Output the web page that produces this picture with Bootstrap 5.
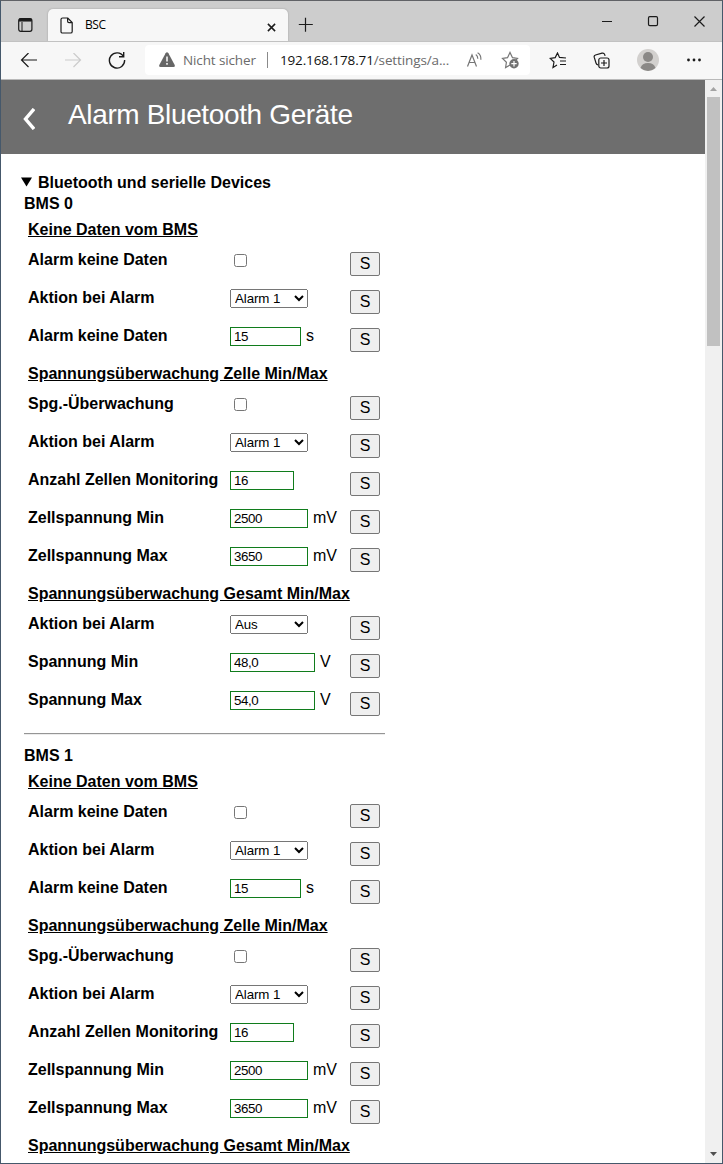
<!DOCTYPE html>
<html lang="de">
<head>
<meta charset="utf-8">
<meta name="viewport" content="width=device-width, initial-scale=1">
<title>BSC</title>
<link href="https://cdn.jsdelivr.net/npm/bootstrap@5.3.0/dist/css/bootstrap.min.css" rel="stylesheet">
<style>
  body { font: 16px/24px "Liberation Sans", Arial, sans-serif; color: #000; background: #fff; }
  .win { height: 1164px; border: 1px solid #45586b; border-top-color: #606266; }
  .ui { font-family: "Open Sans", "Noto Sans", sans-serif; }
  .tabstrip { height: 40px; background: #cdcdcd; padding-left: 47px; }
  .pagetab { width: 240px; height: 32px; margin-top: 8px; background: #f7f7f7; border-radius: 5px 5px 0 0; font-size: 12px; letter-spacing: -.4px; padding: 0 12px 0 12px; box-shadow: 0 0 2px #999; clip-path: inset(-2px -2px 0 -2px); }
  .toolbar { height: 39px; background: #f7f7f7; border-top: 1px solid #c2c2c2; border-bottom: 1px solid #b9b9b9; }
  .toolbar, .tabstrip { position: relative; }
  .navicons { width: 144px; padding-left: 19px; gap: 26px; }
  .addr { width: 385px; height: 30px; border-radius: 4px; font-size: 13.5px; letter-spacing: -.12px; color: #6b6b6b; padding: 0 11px 0 13px; margin-top: -1px; white-space: nowrap; }
  .warntxt { margin-left: 7px; }
  .sep { width: 1px; height: 16px; background: #8a8a8a; margin: 0 12px 0 11px; }
  .host { color: #111; }
  svg { display: block; flex: none; fill: none; stroke: #1b1b1b; stroke-width: 1.2; }
  .gray { stroke: #767676; }
  .pagehead { height: 74px; background: #6e6e6e; color: #fff; padding-left: 20px; }
  .pagehead svg { stroke: #fff; stroke-width: 3.4; margin-top: 3px; }
  .pagehead h1 { font-size: 28px; line-height: 32px; font-weight: 400; letter-spacing: -.36px; margin: -5px 0 0 33px; }
  .content-area { padding: 17px 0 0 20px; }
  .sumline { height: 21px; font-weight: 700; gap: 6px; }
  .sumline span { padding-top: 2px; }
  .bms { width: 361px; margin-left: 3px; }
  .bms h2 { font-size: 16px; line-height: 24px; font-weight: 700; height: 26px; margin: 0; }
  .bms h3 { font-size: 16px; line-height: 24px; font-weight: 700; height: 30px; margin: 0; padding-left: 4px; text-decoration: underline; white-space: nowrap; }
  .setting { display: grid; grid-template-columns: 202px 120px 30px; height: 38px; padding-left: 4px; }
  .setting label { font-weight: 700; white-space: nowrap; }
  .setting select { width: 78px; height: 19px; margin-top: 3px; font-size: 13.333px; line-height: normal; letter-spacing: -.1px; color: #000; }
  .setting input[type=text] { height: 19px; margin-top: 3px; border: 1px solid #107c1c; border-radius: 0; padding: 1px 2px 1px 3px; font-size: 13.333px; line-height: 15px; letter-spacing: -.4px; color: #000; }
  .setting input[type=checkbox] { width: 13px; height: 13px; margin: 6px 0 0 4px; }
  .unit { margin-left: 5px; }
  .w71 { width: 71px; } .w64 { width: 64px; } .w78 { width: 78px; } .w85 { width: 85px; }
  .save { width: 30px; height: 24px; margin-top: 4px; padding: 0; border: 1px solid #767676; border-radius: 2px; background: #efefef; color: #000; line-height: 22px; text-align: center; }
  .rule { height: 2px; margin: 7px 0 9px; border-top: 1px solid #959595; border-bottom: 1px solid #ececec; }
  .scroller { width: 17px; background: #f0f0f0; }
  .scroller svg { stroke: none; }
  .thumb { width: 13px; height: 249px; background: #c1c1c1; }
</style>
</head>
<body>
<div class="win d-flex flex-column overflow-hidden">
  <div class="tabstrip ui d-flex flex-shrink-0">
    <svg class="position-absolute" style="left:17px;top:16px" width="15" height="16" viewBox="0 0 15 16"><rect x=".7" y="1.7" width="13.2" height="12.6" rx="2"/><path d="M1 3.6h12.6M4 5v9" stroke-width="1"/><path d="M1 3h12.6" stroke-width="3"/></svg>
    <div class="pagetab d-flex align-items-center">
      <svg width="13" height="17" viewBox="0 0 13 17"><path d="M2.6 1h5.2l4.4 4.5v8.9q0 1.6-1.6 1.6h-8Q1 16 1 14.4V2.6Q1 1 2.6 1zM7.6 1v3.3q0 1.4 1.4 1.4h3.2"/></svg>
      <span class="ms-2 ps-1">BSC</span>
      <svg class="ms-auto mt-1" width="9" height="9" viewBox="0 0 10 10"><path d="M1 1l8 8M9 1L1 9" stroke-width="1.7"/></svg>
    </div>
    <svg style="margin:16px 0 0 10px" width="16" height="16" viewBox="0 0 16 16"><path d="M.8 7.500h14M7.500.8v14"/></svg>
    <svg style="margin:15px 0 0 auto" width="104" height="12" viewBox="0 0 104 12"><path d="M0 5.500h10M92.500.5l10 10M102.500.5l-10 10"/><rect x="46.500" y=".6" width="9" height="9" rx="1.300"/></svg>
    <div style="width:16px"></div>
  </div>
  <div class="toolbar ui d-flex align-items-center flex-shrink-0">
    <div class="navicons d-flex align-items-center">
      <svg width="18" height="16" viewBox="0 0 18 16"><path d="M17 7H1.500M8.500 0l-7 7 7 7"/></svg>
      <svg width="18" height="16" viewBox="0 0 18 16"><path d="M1 7h15.500M9.500 0l7 7-7 7" stroke="#cbcbcb"/></svg>
      <svg style="margin-top:-2px" width="18" height="18" viewBox="0 0 18 18"><path d="M15.500 5.500A7.600 7.600 0 1 0 16.600 9M15.700 1v4.700H11" stroke-width="1.400"/></svg>
    </div>
    <div class="addr bg-white d-flex align-items-center">
      <svg width="18" height="16" viewBox="0 0 18 16"><path d="M7.600 1.200Q9-.6 10.400 1.200L16.700 13Q17.300 15 15.500 15h-13Q.7 15 1.300 13z" fill="#666" stroke="none"/><path d="M9 4.500v5M9 11v1.800" stroke="#fff" stroke-width="1.500"/></svg>
      <span class="warntxt">Nicht sicher</span>
      <span class="sep"></span>
      <span><span class="host">192.168.178.71</span>/settings/a...</span>
      <svg class="gray ms-auto" width="17" height="16" viewBox="0 0 17 16"><path d="M1.500 14.500L6 3l4.500 11.500M3 10.500h6M9.800 2.600q2 1.300 2 4.200M11.600.7q3.600 2 3.300 7"/></svg>
      <svg class="gray" style="margin-left:18px" width="18" height="18" viewBox="0 0 18 18"><path d="M9 14l-4.400 2.500.8-5.200L1.500 7.500l5-.8L9 1.500l2.500 5.200 5 .8-2 2"/><circle cx="13" cy="12.700" r="4.700" fill="#707070" stroke="none"/><path d="M10.300 12.700h5.400M13 10v5.400" stroke="#fff"/></svg>
    </div>
    <svg style="margin-left:19px" width="18" height="17" viewBox="0 0 18 17"><path d="M8 13l-4 2.500 1-5.500L1.200 6.400l5-.8L8.500 1l2 4.400 6.500.6M11 9h6M11 12.500h6"/></svg>
    <svg style="margin-left:26px" width="17" height="18" viewBox="0 0 17 18"><rect x="5.800" y="6" width="10.200" height="10" rx="2"/><path d="M8 11h6M11 8v6M5 13Q3.400 12.500 3 11L1.200 5.200Q.8 3.500 2.500 3L9 1.200q2-.5 2.600 1.200l.5 1.500"/></svg>
    <svg style="margin:-2px 0 0 27px" width="22" height="22" viewBox="0 0 22 22"><g stroke="none"><circle cx="11" cy="11" r="11" fill="#d2d0ce"/><circle cx="11" cy="8" r="5" fill="#8a8886"/><path d="M3.500 19Q5 14 11 14t7.500 5Q15 22 11 22t-7.500-3z" fill="#8a8886"/></g></svg>
    <svg style="margin:-2px 0 0 28px" width="14" height="4" viewBox="0 0 14 4"><g fill="#1b1b1b" stroke="none"><circle cx="1.500" cy="2" r="1.400"/><circle cx="7" cy="2" r="1.400"/><circle cx="12.500" cy="2" r="1.400"/></g></svg>
  </div>
  <div class="d-flex flex-grow-1 overflow-hidden">
    <main class="flex-grow-1 overflow-hidden">
      <header class="pagehead d-flex align-items-center">
        <svg width="14" height="22" viewBox="0 0 14 22"><path d="M13 1L4.500 11 13 21"/></svg>
        <h1>Alarm Bluetooth Geräte</h1>
      </header>
      <div class="content-area">
        <div class="sumline d-flex align-items-center"><svg width="11" height="10" viewBox="0 0 11 10"><path d="M0 .5h11L5.500 9.500z" fill="#000" stroke="none"/></svg><span>Bluetooth und serielle Devices</span></div>
        <div id="devices"></div>
      </div>
    </main>
    <div class="scroller d-flex flex-column align-items-center flex-shrink-0">
      <svg width="17" height="17" viewBox="0 0 17 17"><path d="M5 11l3.500-4 3.500 4z" fill="#a3a3a3"/></svg>
      <div class="thumb"></div>
      <svg class="mt-auto" width="17" height="17" viewBox="0 0 17 17"><path d="M5 6h7l-3.500 4z" fill="#505050"/></svg>
    </div>
  </div>
</div>
<script src="https://cdn.jsdelivr.net/npm/bootstrap@5.3.0/dist/js/bootstrap.bundle.min.js"></script>
<script>
  const check = '<input type="checkbox">';
  const pick = v => `<select><option>${v}</option></select>`;
  const field = (v, w, unit = '') => `<input type="text" class="w${w}" value="${v}"><span class="unit">${unit}</span>`;
  const groups = [
    ['Keine Daten vom BMS', [
      ['Alarm keine Daten', check],
      ['Aktion bei Alarm', pick('Alarm 1')],
      ['Alarm keine Daten', field('15', 71, 's')]]],
    ['Spannungsüberwachung Zelle Min/Max', [
      ['Spg.-Überwachung', check],
      ['Aktion bei Alarm', pick('Alarm 1')],
      ['Anzahl Zellen Monitoring', field('16', 64)],
      ['Zellspannung Min', field('2500', 78, 'mV')],
      ['Zellspannung Max', field('3650', 78, 'mV')]]],
    ['Spannungsüberwachung Gesamt Min/Max', [
      ['Aktion bei Alarm', pick('Aus')],
      ['Spannung Min', field('48,0', 85, 'V')],
      ['Spannung Max', field('54,0', 85, 'V')]]]
  ];
  const section = (title, rows) => `<h3>${title}</h3>` + rows.map(([label, control]) =>
    `<div class="setting"><label>${label}</label><div class="d-flex align-items-start">${control}</div><button class="save">S</button></div>`).join('');
  const bms = (n, list) => `<section class="bms"><h2>BMS ${n}</h2>${list.map(g => section(...g)).join('')}</section>`;
  document.getElementById('devices').innerHTML =
    bms(0, groups) + '<div class="bms"><div class="rule"></div></div>' +
    bms(1, [groups[0], groups[1], [groups[2][0], []]]);
</script>
</body>
</html>
